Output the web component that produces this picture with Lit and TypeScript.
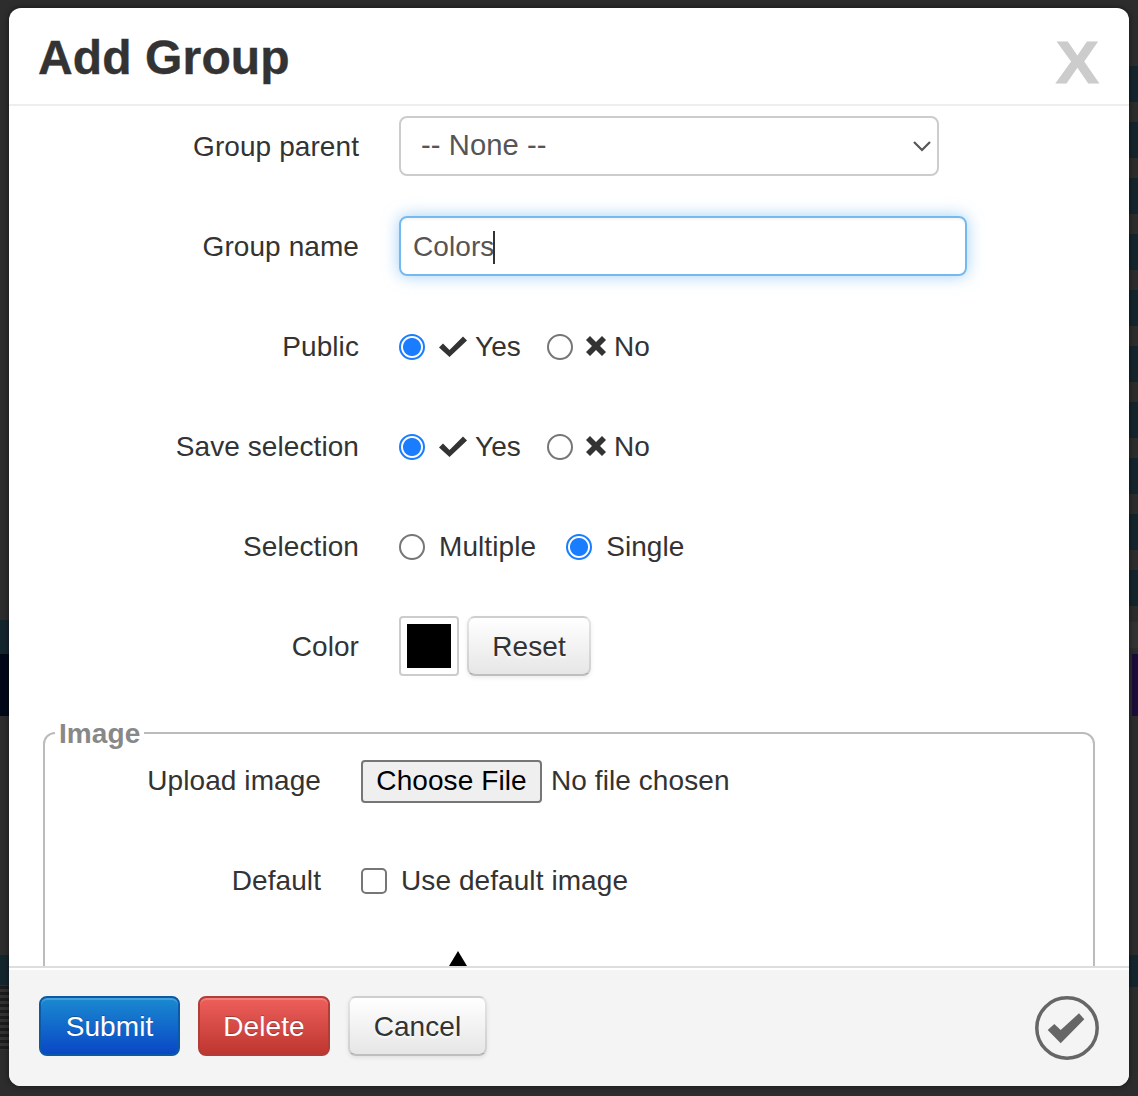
import { LitElement, html, css } from "lit";
import { customElement } from "lit/decorators.js";

const font = css`"Liberation Sans", Arial, Helvetica, sans-serif`;

@customElement("app-root")
export class AppRoot extends LitElement {
  static styles = css`
    :host {
      display: block;
      box-sizing: border-box;
      width: 1138px;
      height: 1096px;
      padding: 8px 9px 10px;
      overflow: hidden;
      font-family: ${font};
      font-size: 28px;
      letter-spacing: 0.08px;
      color: #333;
      background-color: #2d2d2d;
      background-image:
        repeating-linear-gradient(180deg, #14262d 0 36px, #2d2d2d 36px 56px),
        linear-gradient(#333, #333),
        linear-gradient(#1b0c3a, #1b0c3a),
        linear-gradient(#14262d, #14262d),
        linear-gradient(#14262d, #14262d),
        linear-gradient(#020817, #020817),
        linear-gradient(#14262d, #14262d),
        repeating-linear-gradient(180deg, #1c1c1c 0 3px, #333 3px 6px);
      background-repeat: no-repeat;
      background-size: 9px 550px, 9px 26px, 6px 62px, 9px 32px, 9px 34px, 9px 62px, 9px 30px, 9px 64px;
      background-position:
        right 0 top 66px,
        right 0 top 622px,
        right 0 top 654px,
        right 0 top 955px,
        left 0 top 620px,
        left 0 top 654px,
        left 0 top 955px,
        left 0 top 986px;
    }
    * { box-sizing: border-box; }
    button, select { letter-spacing: inherit; }
    .modal {
      height: 1078px;
      display: flex;
      flex-direction: column;
      background: #fff;
      border-radius: 12px;
      overflow: hidden;
      box-shadow: 0 0 6px rgba(0, 0, 0, 0.55);
    }
    .header {
      flex: none;
      height: 98px;
      padding: 0 30px 0 29px;
      display: flex;
      align-items: center;
      justify-content: space-between;
      border-bottom: 2px solid #eee;
    }
    h3 {
      margin: 4px 0 0;
      font-size: 48px;
      font-weight: 700;
      line-height: 92px;
      letter-spacing: 0.12px;
      color: #333;
      -webkit-text-stroke: 0.4px #333;
    }
    .close {
      font-size: 60px;
      font-weight: 700;
      line-height: 60px;
      color: #ccc;
      margin-top: 14px;
      -webkit-text-stroke: 1px #ccc;
      transform: scaleX(1.08);
      transform-origin: right center;
    }
    .body {
      flex: 1;
      min-height: 0;
      overflow: hidden;
      padding: 10px 34px 0 35px;
    }
    .row {
      display: flex;
      align-items: center;
      gap: 40px;
      height: 60px;
      margin-bottom: 40px;
    }
    .label {
      flex: none;
      width: 315px;
      text-align: right;
    }
    .body > .row > .label,
    .choice {
      margin-top: 2px;
    }
    fieldset .label { width: 276px; }
    .select-wrap {
      position: relative;
      width: 540px;
      height: 60px;
    }
    select {
      appearance: none;
      display: block;
      width: 100%;
      height: 100%;
      padding: 0 0 2px 20px;
      border: 2px solid #ccc;
      border-radius: 8px;
      background: #fff;
      color: #555;
      font-family: inherit;
      font-size: 29.2px;
    }
    .chevron {
      position: absolute;
      right: 8px;
      top: 24px;
      width: 18px;
      height: 12px;
    }
    .input {
      width: 568px;
      height: 60px;
      padding: 2px 0 0 12px;
      display: flex;
      align-items: center;
      border: 2px solid #74b9f0;
      border-radius: 8px;
      color: #555;
      box-shadow: 0 0 16px rgba(82, 168, 236, 0.55), inset 0 2px 2px rgba(0, 0, 0, 0.04);
    }
    .caret {
      width: 2px;
      height: 33px;
      margin-left: -1px;
      background: #333;
    }
    .opts {
      display: flex;
      align-items: center;
    }
    .opt {
      display: flex;
      align-items: center;
    }
    input[type="radio"],
    input[type="checkbox"] {
      appearance: none;
      flex: none;
      width: 26px;
      height: 26px;
      margin: 0 14px 0 0;
      background: #fff;
      border: 2px solid #767676;
    }
    input[type="radio"] { border-radius: 50%; }
    input[type="checkbox"] { border-radius: 5px; }
    input[type="radio"]:checked {
      border-color: #1a7dff;
      background: radial-gradient(circle, #1a7dff 0 8.5px, #fff 9.5px);
    }
    .tight input[type="radio"] { margin-right: 13px; }
    .ico {
      flex: none;
      fill: #333;
    }
    .yes-ico { width: 28px; height: 21px; margin: -2px 8px 0 0; }
    .no-ico { width: 20px; height: 20px; margin: -2px 8px 0 0; }
    .gap-yes { margin-right: 26px; }
    .gap-multi { margin-right: 30px; }
    .swatch {
      width: 60px;
      height: 60px;
      padding: 6px;
      border: 2px solid #ccc;
      border-radius: 4px;
      background: #fff;
      margin-right: 8px;
    }
    .swatch div { width: 100%; height: 100%; background: #000; }
    .btn {
      height: 60px;
      border-radius: 8px;
      font: inherit;
      padding: 2px 0 0;
      display: inline-flex;
      align-items: center;
      justify-content: center;
    }
    .btn-default {
      color: #333;
      text-shadow: 0 2px 2px rgba(255, 255, 255, 0.75);
      background: linear-gradient(#fff, #e6e6e6);
      border: 2px solid rgba(0, 0, 0, 0.1);
      border-bottom-color: rgba(0, 0, 0, 0.25);
      box-shadow: inset 0 2px 0 rgba(255, 255, 255, 0.2), 0 2px 4px rgba(0, 0, 0, 0.08);
    }
    .reset { width: 124px; }
    fieldset {
      margin: 0 0 0 -1px;
      padding: 1px 0 0;
      min-width: 0;
      height: 400px;
      border: 2px solid #bbb;
      border-radius: 12px;
    }
    legend {
      margin-left: 10px;
      padding: 0 4px;
      font-weight: 700;
      line-height: 34px;
      color: #888;
    }
    legend span {
      display: inline-block;
      transform: translateY(1px);
    }
    .file-btn {
      flex: none;
      width: 181px;
      height: 43px;
      padding: 0;
      font: inherit;
      color: #000;
      background: #efefef;
      border: 2px solid #767676;
      border-radius: 4px;
      margin-right: 9px;
    }
    .arrow {
      width: 0;
      height: 0;
      margin: 1px 0 0 404px;
      border-left: 9px solid transparent;
      border-right: 9px solid transparent;
      border-bottom: 15px solid #000;
    }
    .footer {
      flex: none;
      height: 120px;
      padding: 0 30px 2px;
      display: flex;
      align-items: center;
      background: #f4f4f4;
      border-top: 2px solid #ddd;
      box-shadow: inset 0 2px 0 #fff;
    }
    .submit {
      width: 141px;
      color: #fff;
      text-shadow: 0 -1px 0 rgba(0, 0, 0, 0.25);
      background: linear-gradient(#1a8ad0, #0a47c6);
      border: 2px solid #0a5aa8;
      box-shadow: inset 0 2px 0 rgba(255, 255, 255, 0.2);
      margin-right: 18px;
    }
    .delete {
      width: 132px;
      color: #fff;
      text-shadow: 0 -1px 0 rgba(0, 0, 0, 0.25);
      background: linear-gradient(#ee5f5b, #bd362f);
      border: 2px solid #b23c38;
      box-shadow: inset 0 2px 0 rgba(255, 255, 255, 0.2);
      margin-right: 18px;
    }
    .cancel { width: 139px; }
    .ok {
      width: 64px;
      height: 64px;
      margin: 4px 0 0 auto;
    }
  `;

  private check() {
    return html`<svg class="ico yes-ico" viewBox="0 0 28 21" aria-hidden="true">
      <path d="M0 11.5 L4 7.5 L10.5 14 L24 0.5 L28 4.5 L10.5 21 Z" />
    </svg>`;
  }

  private cross() {
    return html`<svg class="ico no-ico" viewBox="0 0 20 20" aria-hidden="true">
      <path d="M4 0 L10 6 L16 0 L20 4 L14 10 L20 16 L16 20 L10 14 L4 20 L0 16 L6 10 L0 4 Z" />
    </svg>`;
  }

  private yesNo(name: string) {
    return html`<div class="opts choice">
      <label class="opt gap-yes"><input type="radio" name=${name} checked />${this.check()}Yes</label>
      <label class="opt tight"><input type="radio" name=${name} />${this.cross()}No</label>
    </div>`;
  }

  render() {
    return html`
      <div class="modal">
        <div class="header">
          <h3>Add Group</h3>
          <span class="close">X</span>
        </div>
        <div class="body">
          <div class="row">
            <div class="label">Group parent</div>
            <div class="select-wrap">
              <select><option>-- None --</option></select>
              <svg class="chevron" viewBox="0 0 18 12" fill="none" stroke="#555" stroke-width="2.2" aria-hidden="true">
                <path d="M1 2 L9 10 L17 2" />
              </svg>
            </div>
          </div>
          <div class="row">
            <div class="label">Group name</div>
            <div class="input" role="textbox">Colors<span class="caret"></span></div>
          </div>
          <div class="row">
            <div class="label">Public</div>
            ${this.yesNo("public")}
          </div>
          <div class="row">
            <div class="label">Save selection</div>
            ${this.yesNo("save")}
          </div>
          <div class="row">
            <div class="label">Selection</div>
            <div class="opts choice">
              <label class="opt gap-multi"><input type="radio" name="sel" />Multiple</label>
              <label class="opt"><input type="radio" name="sel" checked />Single</label>
            </div>
          </div>
          <div class="row">
            <div class="label">Color</div>
            <div class="opts">
              <div class="swatch"><div></div></div>
              <button class="btn btn-default reset">Reset</button>
            </div>
          </div>
          <fieldset>
            <legend><span>Image</span></legend>
            <div class="row">
              <div class="label">Upload image</div>
              <div class="opts">
                <button class="file-btn">Choose File</button>No file chosen
              </div>
            </div>
            <div class="row">
              <div class="label">Default</div>
              <label class="opt"><input type="checkbox" />Use default image</label>
            </div>
            <div class="arrow"></div>
          </fieldset>
        </div>
        <div class="footer">
          <button class="btn submit">Submit</button>
          <button class="btn delete">Delete</button>
          <button class="btn btn-default cancel">Cancel</button>
          <svg class="ok" viewBox="0 0 64 64" aria-hidden="true">
            <circle cx="32" cy="32" r="30.2" fill="none" stroke="#666" stroke-width="3.5" />
            <path fill="#666" d="M12.7 34 L19.3 28 L25.7 34 L44 17.3 L49.3 23.3 L25.7 47.3 Z" />
          </svg>
        </div>
      </div>
    `;
  }
}
